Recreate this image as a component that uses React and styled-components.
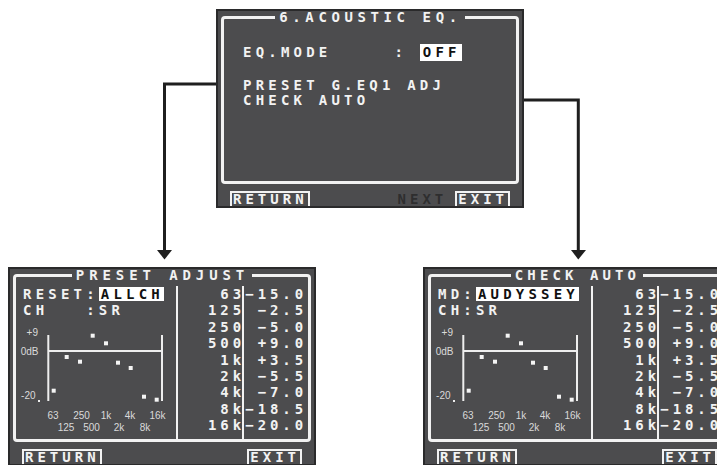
import React from 'react';
import styled, { createGlobalStyle } from 'styled-components';

const GlobalStyle = createGlobalStyle`
  html, body {
    margin: 0;
    padding: 0;
    background: #fff;
  }
`;

const Page = styled.div`
  position: relative;
  width: 717px;
  height: 465px;
  overflow: hidden;
  background: #fff;
`;

const TopRow = styled.div`
  padding: 9px 0 0 216px;
`;

const BottomRow = styled.div`
  display: flex;
  gap: 107px;
  margin-top: 59px;
  padding-left: 8px;
`;

// one on-screen display panel
const Screen = styled.div`
  flex-shrink: 0;
  box-sizing: border-box;
  width: 308px;
  height: 199px;
  display: flex;
  flex-direction: column;
  padding: 0 3px;
  background: #4c4c4e;
  border: 2px solid #2a2a2b;
  color: #f2f2f2;
  font-family: "DejaVu Sans Mono", monospace;
  font-weight: bold;
  font-size: 14px;
  letter-spacing: 4.2px;
`;

const Frame = styled.fieldset`
  flex: 1 1 auto;
  min-width: 0;
  min-height: 0;
  margin: 0;
  padding: 0;
  border: 3px solid #f2f2f2;
  border-radius: 4px;
  display: flex;
  flex-direction: column;
`;

const Title = styled.legend`
  margin: 0 auto;
  padding: 0 3px 0 4px;
  line-height: 13px;
  white-space: pre;
  letter-spacing: ${(p) => p.$spacing || 4.2}px;
`;

const Highlight = styled.span`
  display: inline-block;
  padding: ${(p) => (p.$tall ? '0 1px 0 3px' : '1px 0 0 2px')};
  line-height: ${(p) => (p.$tall ? 17 : 13)}px;
  background: #fff;
  color: #111;
`;

/* top menu */
const MenuBody = styled.div`
  padding: 20px 0 0 19px;
  white-space: pre;
`;

const ModeLine = styled.div`
  line-height: 17px;
`;

const MenuList = styled.div`
  margin-top: 17px;
  line-height: 15px;
`;

/* bottom panels */
const Table = styled.div`
  flex: 1;
  display: grid;
  grid-template-columns: 160px 66px 1fr;
  margin-top: 4px;
  line-height: 16.4px;
`;

const LeftPane = styled.div`
  display: flex;
  flex-direction: column;
`;

const Line = styled.div`
  padding-left: 7px;
  white-space: pre;
`;

const Column = styled.div`
  border-left: 2px solid #f2f2f2;
  text-align: right;
  letter-spacing: 3.9px;
  padding-right: ${(p) => p.$pad}px;
`;

const Cell = styled.div`
  margin-right: ${(p) => p.$shift || 0}px;
`;

const ButtonBar = styled.div`
  flex: 0 0 22px;
  display: flex;
  align-items: flex-end;
  padding: 0 9px 0 9px;
  line-height: 13px;
  letter-spacing: 4px;
`;

const KeyButton = styled.div`
  border: 2px solid #f2f2f2;
  border-bottom: none;
  padding-left: 1px;
`;

const Spacer = styled.div`
  flex: 1;
`;

const Dim = styled.div`
  color: #2e2e2f;
  margin-right: 8px;
`;

const Overlay = styled.svg`
  position: absolute;
  left: 0;
  top: 0;
  pointer-events: none;
`;

const GraphSvg = styled.svg`
  display: block;
`;

const freqs = ['63', '125', '250', '500', '1k', '2k', '4k', '8k', '16k'];
const gains = ['\u221215.0', '\u22122.5', '\u22125.0', '+9.0', '+3.5', '\u22125.5', '\u22127.0', '\u221218.5', '\u221220.0'];
const points = [
  [37.7, 71.7], [50.7, 38], [64, 42.7], [76.7, 16.7], [90, 24.3],
  [102, 43.7], [114.7, 49], [128, 77.7], [140.7, 80.7],
];

const EqGraph = () => (
  <GraphSvg width="160" height="114" viewBox="0 0 160 114">
    <g stroke="#eeeeee" strokeWidth="2" fill="none">
      <line x1="32.3" y1="16" x2="32.3" y2="82" />
      <line x1="146" y1="16" x2="146" y2="82" />
      <line x1="32" y1="32" x2="146" y2="32" />
    </g>
    <rect x="22" y="81" width="2" height="2" fill="#eee" />
    {points.map(([x, y], i) => (
      <rect key={i} x={x - 2} y={y - 2} width="4" height="4" fill="#f4f4f4" />
    ))}
    <g fill="#dadada" fontFamily="'Liberation Sans', Arial, sans-serif" fontSize="10" fontWeight="normal" letterSpacing="0">
      <text x="22" y="17" textAnchor="end">+9</text>
      <text x="22.5" y="36" textAnchor="end">0dB</text>
      <text x="19.5" y="80" textAnchor="end">-20</text>
      <g textAnchor="middle">
        <text x="37" y="100">63</text>
        <text x="65.5" y="100">250</text>
        <text x="90" y="100">1k</text>
        <text x="114" y="100">4k</text>
        <text x="141.5" y="100">16k</text>
        <text x="50" y="112">125</text>
        <text x="75.5" y="112">500</text>
        <text x="103" y="112">2k</text>
        <text x="129" y="112">8k</text>
      </g>
    </g>
  </GraphSvg>
);

const EqPanel = ({ title, spacing, first, second }) => (
  <Screen>
    <Frame>
      <Title $spacing={spacing}>{title}</Title>
      <Table>
        <LeftPane>
          {first}
          {second}
          <EqGraph />
        </LeftPane>
        <Column $pad={0}>
          {freqs.map((f) => (
            <Cell key={f} $shift={-3}>{f}</Cell>
          ))}
        </Column>
        <Column $pad={1}>
          {gains.map((g, i) => (
            <Cell key={i}>{g}</Cell>
          ))}
        </Column>
      </Table>
    </Frame>
    <ButtonBar>
      <KeyButton>RETURN</KeyButton>
      <Spacer />
      <KeyButton>EXIT</KeyButton>
    </ButtonBar>
  </Screen>
);

export default function App() {
  return (
    <Page>
      <GlobalStyle />
      <TopRow>
        <Screen>
          <Frame>
            <Title $spacing={4.6}>6.ACOUSTIC EQ.</Title>
            <MenuBody>
              <ModeLine>
                {'EQ.MODE     : '}
                <Highlight $tall>OFF</Highlight>
              </ModeLine>
              <MenuList>
                <div>PRESET G.EQ1 ADJ</div>
                <div>CHECK AUTO</div>
              </MenuList>
            </MenuBody>
          </Frame>
          <ButtonBar>
            <KeyButton>RETURN</KeyButton>
            <Spacer />
            <Dim>NEXT</Dim>
            <KeyButton>EXIT</KeyButton>
          </ButtonBar>
        </Screen>
      </TopRow>

      <BottomRow>
        <EqPanel
          title="PRESET ADJUST"
          spacing={4.9}
          first={<Line>RESET:<Highlight>ALLCH</Highlight></Line>}
          second={<Line>{'CH   :SR'}</Line>}
        />
        <EqPanel
          title="CHECK AUTO"
          spacing={4.1}
          first={<Line>MD:<Highlight>AUDYSSEY</Highlight></Line>}
          second={<Line>CH:SR</Line>}
        />
      </BottomRow>

      <Overlay width="717" height="465" viewBox="0 0 717 465">
        <g stroke="#1f1f1f" strokeWidth="3" fill="none">
          <polyline points="216,84 164.5,84 164.5,251" />
          <polyline points="524,100 578.3,100 578.3,251" />
        </g>
        <polygon points="157,250 172,250 164.5,259.5" fill="#1f1f1f" />
        <polygon points="571,250 586,250 578.3,259.5" fill="#1f1f1f" />
      </Overlay>
    </Page>
  );
}
